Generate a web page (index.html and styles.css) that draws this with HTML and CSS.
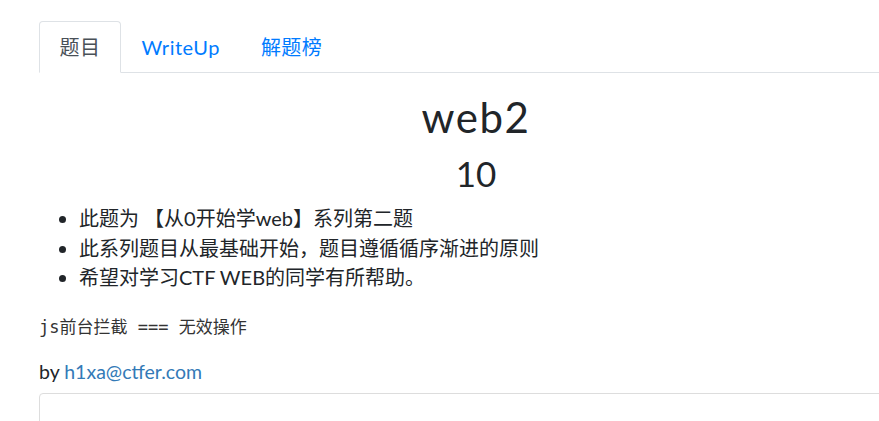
FILE: index.html
```html
<!DOCTYPE html>
<html lang="zh">
<head>
  <meta charset="UTF-8" />
  <meta name="viewport" content="width=device-width, initial-scale=1.0" />
  <title>web2</title>
  <link rel="stylesheet" href="styles.css">
</head>
<body>
  <div class="modal">
    <ul class="nav-tabs">
      <li><a class="active" href="#">题目</a></li>
      <li><a href="#">WriteUp</a></li>
      <li><a href="#">解题榜</a></li>
    </ul>
    <div class="challenge">
      <h2 class="name">web2</h2>
      <h3 class="value">10</h3>
      <div class="desc">
        <ul>
          <li>此题为 【从0开始学web】系列第二题</li>
          <li>此系列题目从最基础开始，题目遵循循序渐进的原则</li>
          <li>希望对学习CTF WEB的同学有所帮助。</li>
        </ul>
        <p class="hint">js前台拦截 === 无效操作</p>
        <p class="author">by <a href="#">h1xa@ctfer.com</a></p>
      </div>
      <div class="box"></div>
    </div>
  </div>
</body>
</html>
```

FILE: styles.css
```css
body {
  margin: 0;
  font-family: Lato, "Noto Sans CJK SC", sans-serif;
  color: #212529;
  background: #fff;
  overflow: hidden;
}
.modal {
  width: 874px;
  margin-left: 39px;
  padding-top: 21px;
}
.nav-tabs {
  display: flex;
  list-style: none;
  margin: 0;
  padding: 0;
  border-bottom: 1px solid #dee2e6;
}
.nav-tabs li {
  margin-bottom: -1px;
}
.nav-tabs a {
  display: block;
  padding: 12px 19.5px;
  font-size: 20px;
  line-height: 26px;
  letter-spacing: 0.5px;
  color: #007bff;
  text-decoration: none;
  border: 1px solid transparent;
  border-radius: 4px 4px 0 0;
}
.nav-tabs a.active {
  color: #495057;
  background: #fff;
  border-color: #dee2e6 #dee2e6 #fff;
}
.challenge {
  text-align: center;
}
.name {
  margin: 18px 0 0;
  font-size: 42px;
  font-weight: 400;
  letter-spacing: 1.5px;
  line-height: 52px;
}
.value {
  margin: 8px 0 0;
  font-size: 35px;
  font-weight: 400;
  line-height: 44px;
}
.desc {
  text-align: left;
  font-size: 20px;
}
.desc ul {
  margin: 9px 0 0;
  padding-left: 40px;
  line-height: 29.5px;
}
.hint {
  margin: 24px 0 0;
  font-family: "DejaVu Sans Mono", "Noto Sans CJK SC", monospace;
  font-size: 17px;
  line-height: 20px;
  color: #333;
}
.author {
  margin: 23px 0 0;
  font-size: 19.5px;
  line-height: 24px;
}
.author a {
  color: #337ab7;
  text-decoration: none;
}
.box {
  margin-top: 9px;
  height: 60px;
  border: 1px solid #ddd;
  border-radius: 4px;
}
```
